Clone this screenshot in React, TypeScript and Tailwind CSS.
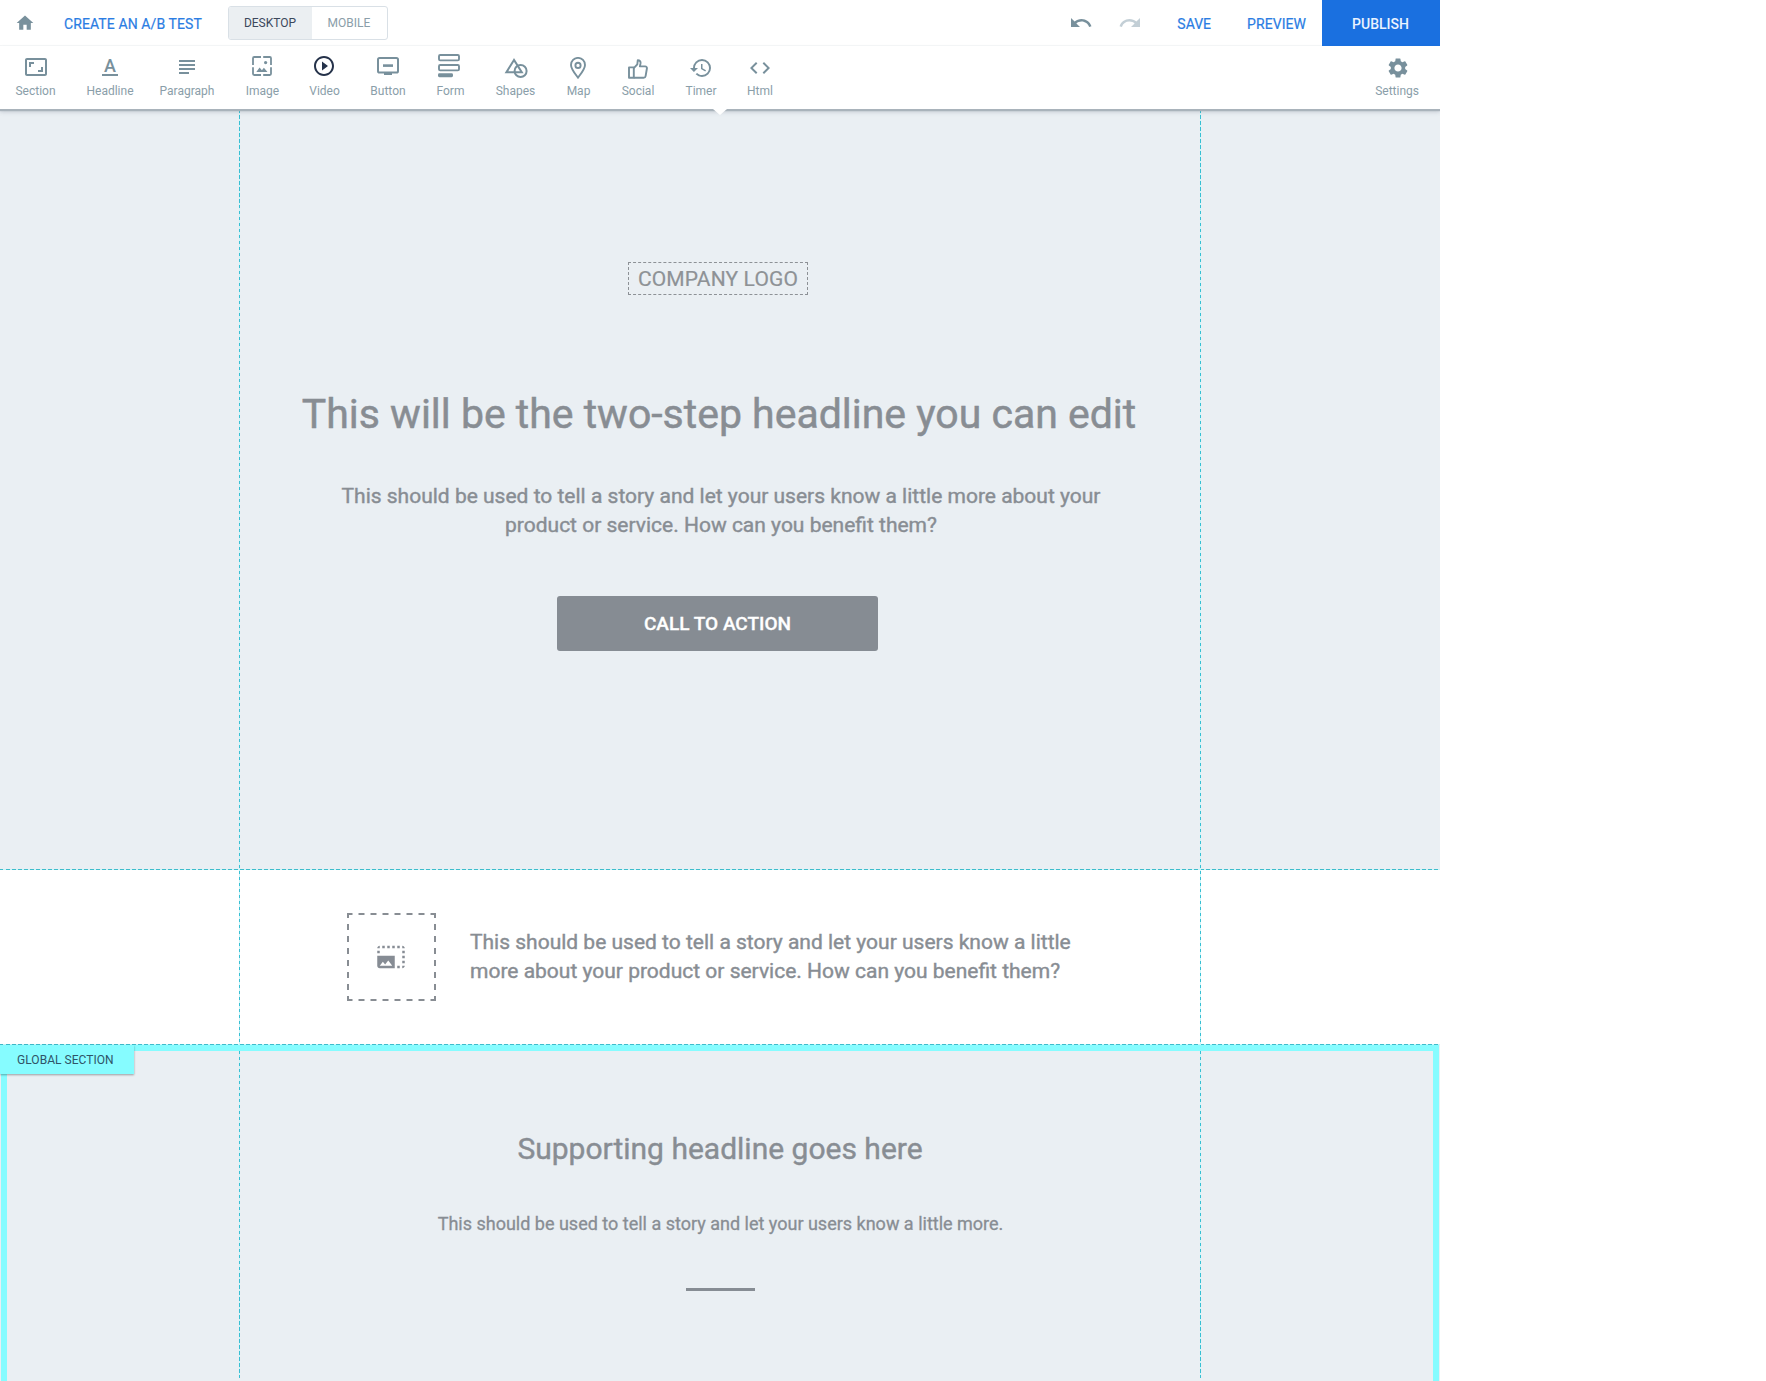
import React from "react";
import {
  MdAspectRatio,
  MdCode,
  MdHistory,
  MdHome,
  MdPhotoSizeSelectLarge,
  MdPlayCircleOutline,
  MdRedo,
  MdSettings,
  MdSubject,
  MdUndo,
} from "react-icons/md";

function HeadlineIcon() {
  return (
    <span className="mt-[3px] flex h-[19px] w-4 justify-center border-b-2 border-current text-[18px] leading-[17px] font-medium">
      A
    </span>
  );
}

function ImageIcon() {
  return (
    <svg className="mt-[2px] mr-px" width="20" height="20" viewBox="0 0 20 20" fill="none" stroke="currentColor" strokeWidth="1.8">
      <path d="M1 9V2.200Q1 1 2.200 1H9M11.200 1h6.600Q19 1 19 2.200V9M19 11.200v6.600q0 1.200-1.200 1.200h-6.600M9 19H2.200Q1 19 1 17.800v-6.600" />
      <circle cx="13.6" cy="6.6" r="1.6" fill="currentColor" stroke="none" />
      <path d="M4.300 16l3.300-4.600 2.300 2.800 2-2.400 3.600 4.200z" fill="currentColor" stroke="none" />
    </svg>
  );
}

function ButtonIcon() {
  return (
    <svg className="mt-[3px]" width="22" height="18" viewBox="0 0 22 18" fill="none" stroke="currentColor" strokeWidth="2">
      <rect x="1" y="1" width="20" height="14.5" rx="1.6" />
      <path d="M6 8.600h10" strokeWidth="2.6" />
      <path d="M7 17h8" strokeWidth="2" />
    </svg>
  );
}

function FormIcon() {
  return (
    <svg className="mr-[3px] shrink-0" width="22" height="24" viewBox="0 0 22 24" fill="none" stroke="currentColor" strokeWidth="1.9">
      <rect x="1" y="1" width="20" height="5.4" rx="1.2" />
      <rect x="1" y="11" width="20" height="5.400" rx="1.2" />
      <rect x="0" y="19.2" width="15" height="4" rx="1.4" fill="currentColor" stroke="none" />
    </svg>
  );
}

function ShapesIcon() {
  return (
    <svg className="mt-[3px]" width="24" height="22" viewBox="0 0 24 22" fill="none" stroke="currentColor" strokeWidth="2">
      <path d="M10 3L2.400 15.300h15.400z" />
      <circle cx="16.6" cy="14" r="6" />
    </svg>
  );
}

function MapIcon() {
  return (
    <svg className="mt-[3px] mr-px" width="16" height="22" viewBox="0 0 16 22" fill="none" stroke="currentColor" strokeWidth="1.9">
      <path d="M8 20.600C5.400 17.200 1 12 1 7.900a7 7 0 0 1 14 0C15 12 10.600 17.200 8 20.600z" />
      <circle cx="8" cy="8.4" r="2.6" />
    </svg>
  );
}

function SocialIcon() {
  return (
    <svg className="mt-[5px]" width="20" height="20" viewBox="0 0 20 20" fill="none" stroke="currentColor" strokeWidth="1.9" strokeLinejoin="round">
      <path d="M1 8.400h4.800v10.400H1z" />
      <path d="M5.800 9.200L9.300 5.400 9.800 1.200c2 0 3 1.500 2.700 3.200L11.900 7.400h5.200c1.300 0 2 .9 1.800 2.100l-1.300 7.600c-.2 1.100-.9 1.700-2 1.700H5.800" />
    </svg>
  );
}

function DashedFrame() {
  return (
    <svg className="absolute inset-0" width="89" height="88" viewBox="0 0 89 88" stroke="#888d93" strokeWidth="2" strokeDasharray="6 6">
      <path d="M0 1h89M0 87h89" strokeDashoffset="0.5" />
      <path d="M1 0v88M88 0v88" strokeDashoffset="1" />
    </svg>
  );
}

type Tool = { label: string; icon: React.ReactNode; className?: string };

const tools: Tool[] = [
  { label: "Section", icon: <MdAspectRatio size={24} className="mt-[1px] ml-px" />, className: "w-[40px]" },
  { label: "Headline", icon: <HeadlineIcon />, className: "w-[47px]" },
  { label: "Paragraph", icon: <MdSubject size={24} className="mt-[1px]" />, className: "-ml-[5px] w-[55px]" },
  { label: "Image", icon: <ImageIcon />, className: "w-[34px]" },
  { label: "Video", icon: <MdPlayCircleOutline size={24} className="mr-px text-[#25324a]" />, className: "-ml-px w-[30px]" },
  { label: "Button", icon: <ButtonIcon />, className: "-ml-[0.500px] w-[36px]" },
  { label: "Form", icon: <FormIcon />, className: "-ml-[0.500px] w-[28px]" },
  { label: "Shapes", icon: <ShapesIcon />, className: "w-[40px]" },
  { label: "Map", icon: <MapIcon />, className: "w-[24px]" },
  { label: "Social", icon: <SocialIcon />, className: "w-[33px]" },
  { label: "Timer", icon: <MdHistory size={24} className="mt-[2px] mr-px" />, className: "w-[31px]" },
  { label: "Html", icon: <MdCode size={24} className="mt-[2px]" />, className: "w-[25px]" },
];

function ToolItem({ label, icon, className = "" }: Tool) {
  return (
    <button className={`flex shrink-0 flex-col items-center pt-2 ${className}`}>
      <span className="flex h-[29px] items-start justify-center text-[#78909c]">{icon}</span>
      <span className="text-xs leading-4 whitespace-nowrap text-[#8a9ea9]">{label}</span>
    </button>
  );
}

function TopBar() {
  return (
    <header className="flex h-[46px] items-center border-b border-[#f6f7f8] text-sm text-[#2b7de3]">
      <MdHome size={20} className="ml-[14.500px] text-[#78909c]" />
      <a className="ml-[29.500px] w-[138px] pt-[2px] tracking-[0.1px] whitespace-nowrap [-webkit-text-stroke:0.2px]">
        CREATE AN A/B TEST
      </a>
      <div className="ml-[26px] flex h-[34px] w-[160px] overflow-hidden rounded-[3px] border border-[#d9e0e6] text-xs">
        <span className="flex w-[83px] items-center justify-center bg-[#ebeff2] pr-px text-[#3c485c]">DESKTOP</span>
        <span className="flex flex-1 items-center justify-center pr-px text-[#8a9ea9]">MOBILE</span>
      </div>
      <div className="ml-auto flex h-full items-center">
        <MdUndo size={24} className="text-[#78909c]" />
        <MdRedo size={24} className="ml-[25px] text-[#c3cfd6]" />
        <a className="ml-[35px] pt-[2px] [-webkit-text-stroke:0.2px]">SAVE</a>
        <a className="ml-[36px] pt-[2px] tracking-[0.06px] [-webkit-text-stroke:0.2px]">PREVIEW</a>
        <button className="ml-[16px] h-[46px] w-[118px] self-start bg-[#1a70e0] pt-px pr-px font-medium text-[#eaf3ff]">PUBLISH</button>
      </div>
    </header>
  );
}

const copy = "text-[21px] leading-[29px] [-webkit-text-stroke:0.4px]";
const dashX = "h-px bg-[repeating-linear-gradient(90deg,#3fbccb_0_3.500px,#c9f6fa_3.500px_6px)]";
const dashY = "w-px bg-[repeating-linear-gradient(180deg,#38bfd3_0_3.500px,#c9f6fa_3.500px_6px)]";

export default function App() {
  return (
    <div className="min-h-[1381px] bg-white font-[Roboto,sans-serif]">
      <div className="flex h-[1381px] w-[1440px] flex-col overflow-hidden">
        <TopBar />
        <nav className="relative z-20 flex h-[63px] shrink-0 items-start gap-[31px] bg-white pr-[21px] pl-[15.500px] shadow-[0_2px_1px_#a9b3bb,0_3px_4px_rgba(80,95,110,0.250)]">
          {tools.map((tool) => (
            <ToolItem key={tool.label} {...tool} />
          ))}
          <div className="ml-auto">
            <ToolItem label="Settings" icon={<MdSettings size={24} className="mt-[2px] ml-px" />} />
          </div>
          <span className="absolute top-full left-[713px] h-[6px] w-[14px] bg-white [clip-path:polygon(0_0,100%_0,50%_100%)]" />
        </nav>

        <main className="relative flex flex-1 flex-col text-[#888d93]">
          <section className="flex h-[760px] shrink-0 flex-col items-center bg-[#eaeff3]">
            <div className="mt-[153px] mr-[4px] flex h-[33px] w-[180px] items-center justify-center border border-dashed border-[#8d9196] pt-[2px] text-[21px] tracking-[0.15px] text-[#8e9296] [-webkit-text-stroke:0.2px]">
              COMPANY LOGO
            </div>
            <h1 className="mt-[95px] mr-[2px] text-[41px] leading-[48px] tracking-[-0.01px] [-webkit-text-stroke:0.5px]">
              This will be the two-step headline you can edit
            </h1>
            <p className={`mt-[44px] ml-[2px] text-center ${copy}`}>
              This should be used to tell a story and let your users know a little more about your
              <br />
              product or service. How can you benefit them?
            </p>
            <button className="mt-[56px] mr-[5px] h-[55px] w-[321px] rounded-[3px] bg-[#868c93] pt-px text-[19px] font-medium text-white [-webkit-text-stroke:0.3px]">
              CALL TO ACTION
            </button>
          </section>

          <div className={`shrink-0 ${dashX}`} />

          <section className="flex h-[174px] shrink-0 items-start bg-white pl-[347px]">
            <div className="relative mt-[43px] flex h-[88px] w-[89px] items-center justify-center pr-px">
              <DashedFrame />
              <MdPhotoSizeSelectLarge size={30} className="text-[#868c94]" />
            </div>
            <p className={`mt-[58px] ml-[34px] ${copy}`}>
              This should be used to tell a story and let your users know a little
              <br />
              more about your product or service. How can you benefit them?
            </p>
          </section>

          <div className={`shrink-0 ${dashX}`} />

          <section className="relative z-10 mx-px flex flex-1 flex-col items-center border-x-6 border-t-6 border-[#86fcff]">
            <h2 className="mt-[80px] text-[30px] leading-9 [-webkit-text-stroke:0.4px]">Supporting headline goes here</h2>
            <p className="mt-[45px] ml-px text-lg leading-6 [-webkit-text-stroke:0.3px]">
              This should be used to tell a story and let your users know a little more.
            </p>
            <hr className="mt-[52px] h-[3px] w-[69px] border-0 bg-[#868c93]" />
            <span className="absolute -top-[6px] -left-[7px] flex h-[29px] w-[134px] items-center bg-[#86fcff] pl-[17px] text-xs tracking-[0.04px] text-[#2f5468] shadow-[0_1px_2px_rgba(0,0,0,0.350)]">
              GLOBAL SECTION
            </span>
          </section>

          <div className="absolute inset-x-0 top-[936px] bottom-0 bg-[#eaeff3]" />
          <div className={`absolute top-0 bottom-[3px] left-[239px] ${dashY}`} />
          <div className={`absolute top-0 bottom-[3px] left-[1200px] ${dashY}`} />
        </main>
      </div>
    </div>
  );
}
